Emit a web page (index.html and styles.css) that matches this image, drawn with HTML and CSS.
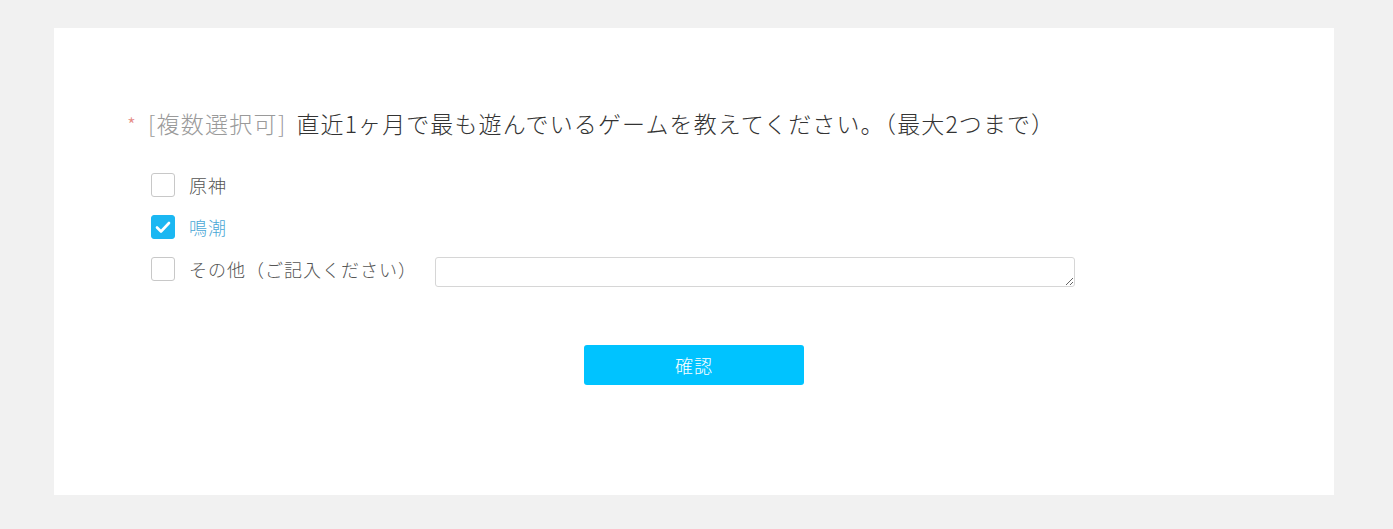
FILE: index.html
```html
<!DOCTYPE html>
<html lang="ja">
<head>
<meta charset="utf-8">
<link rel="stylesheet" href="styles.css">
</head>
<body>
<div class="card">
  <div class="question">
    <span class="star">*</span>
    <span class="tag">[複数選択可]</span>
    <span class="qtext">直近1ヶ月で最も遊んでいるゲームを教えてください。（最大2つまで）</span>
  </div>
  <div class="options">
    <label class="option">
      <span class="box"></span>
      <span class="label">原神</span>
    </label>
    <label class="option checked">
      <span class="box"><svg viewBox="0 0 24 24" width="24" height="24"><path d="M6 12.5l4 4 8-8.5" fill="none" stroke="#fff" stroke-width="2.6" stroke-linecap="round" stroke-linejoin="round"/></svg></span>
      <span class="label">鳴潮</span>
    </label>
    <div class="option">
      <span class="box"></span>
      <span class="label">その他（ご記入ください）</span>
      <textarea class="other"></textarea>
    </div>
  </div>
  <div class="actions">
    <button class="submit">確認</button>
  </div>
</div>
</body>
</html>
```

FILE: styles.css
```css
html, body {
  margin: 0;
  padding: 0;
  background: #f1f1f1;
}
body {
  padding: 28px 59px 34px 54px;
  font-family: "Noto Sans CJK JP", "Noto Sans", sans-serif;
  font-weight: 300;
}
.card {
  background: #fff;
  height: 467px;
  box-sizing: border-box;
  padding: 80px 0 0 73px;
}
.question {
  font-size: 23px;
  line-height: 30px;
  color: #333;
  white-space: nowrap;
  display: flex;
  align-items: baseline;
}
.star {
  color: #e58a84;
  font-size: 20px;
  margin-right: 12px;
}
.tag {
  color: #9a9a9a;
  margin-right: 10px;
  letter-spacing: 1.3px;
}
.qtext {
  letter-spacing: 1.1px;
}
.options {
  margin: 33px 0 0 24px;
  display: flex;
  flex-direction: column;
  gap: 18px;
}
.option {
  display: flex;
  align-items: center;
  height: 24px;
}
.box {
  width: 24px;
  height: 24px;
  box-sizing: border-box;
  border: 1px solid #c8c8c8;
  border-radius: 3px;
  background: #fff;
  display: flex;
}
.checked .box {
  background: #1bb7f2;
  border-color: #1bb7f2;
}
.checked .box svg {
  margin: -1px;
}
.label {
  margin-left: 14px;
  font-size: 18px;
  color: #555;
  letter-spacing: 1px;
}
.checked .label {
  color: #4aa7d6;
}
.other {
  margin: 3px 0 -3px 18px;
  width: 640px;
  height: 30px;
  box-sizing: border-box;
  border: 1px solid #d6d6d6;
  border-radius: 3px;
  padding: 0;
  resize: vertical;
}
.actions {
  display: flex;
  justify-content: center;
  padding-right: 73px;
  margin-top: 64px;
}
.submit {
  width: 220px;
  height: 40px;
  border: none;
  border-radius: 3px;
  background: #00c3ff;
  color: #fff;
  font-family: "Noto Sans CJK JP", sans-serif;
  font-weight: 300;
  font-size: 18px;
  letter-spacing: 1px;
}
```
